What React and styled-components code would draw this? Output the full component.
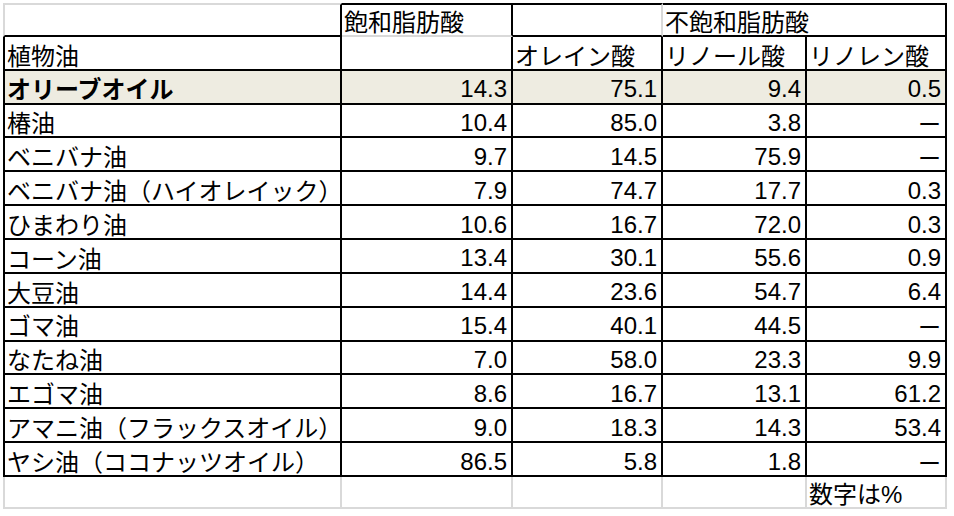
// ===== import base =====
import React from "react"
import styled, { createGlobalStyle } from "styled-components"

// ===== colours =====
const LINE = "#000000"
const GRID = "#d9d9d9"
const TAN = "#eeece1"

// ===== style =====
const GlobalStyle = createGlobalStyle`
    html, body {
        margin : 0;
        padding : 0;
        background : #ffffff;
    }
    body {
        font-family : "Liberation Sans", "Noto Sans CJK JP", sans-serif;
        color : #000000;
    }
`

const Page = styled.div`
    width : 954px;
    height : 516px;
    padding : 3px 0 0 3px;
    box-sizing : border-box;
    overflow : hidden;
`

const Sheet = styled.div`
    display : grid;
    grid-template-columns : 339px 171px 150px 144px 140px;
    grid-template-rows : repeat(14, 33.86px) 32px;
`

const Cell = styled.div`
    box-sizing : border-box;
    display : flex;
    align-items : flex-end;
    justify-content : ${(p) => (p.$num ? "flex-end" : "flex-start")};
    padding : 0 4px 0 ${(p) => (p.$num ? "4px" : "2px")};
    grid-column : ${(p) => (p.$span ? `span ${p.$span}` : "auto")};
    background : ${(p) => (p.$bg ? TAN : "transparent")};
    border-right : 2px solid ${(p) => p.$r || LINE};
    border-bottom : 2px solid ${(p) => p.$b || LINE};
    border-top : ${(p) => (p.$t ? `2px solid ${p.$t}` : "none")};
    border-left : ${(p) => (p.$l ? `2px solid ${p.$l}` : "none")};
    font-size : 24px;
    font-weight : ${(p) => (p.$bold ? 700 : 400)};
    line-height : ${(p) => (p.$num ? "1.1" : "1.05")};
    white-space : nowrap;
`

const Dash = styled.span`
    font-family : "Noto Sans CJK JP", sans-serif;
    font-size : 23px;
`

// ===== data =====
const oils = [
    ["オリーブオイル", "14.3", "75.1", "9.4", "0.5"],
    ["椿油", "10.4", "85.0", "3.8", null],
    ["ベニバナ油", "9.7", "14.5", "75.9", null],
    ["ベニバナ油（ハイオレイック）", "7.9", "74.7", "17.7", "0.3"],
    ["ひまわり油", "10.6", "16.7", "72.0", "0.3"],
    ["コーン油", "13.4", "30.1", "55.6", "0.9"],
    ["大豆油", "14.4", "23.6", "54.7", "6.4"],
    ["ゴマ油", "15.4", "40.1", "44.5", null],
    ["なたね油", "7.0", "58.0", "23.3", "9.9"],
    ["エゴマ油", "8.6", "16.7", "13.1", "61.2"],
    ["アマニ油（フラックスオイル）", "9.0", "18.3", "14.3", "53.4"],
    ["ヤシ油（ココナッツオイル）", "86.5", "5.8", "1.8", null],
]

//  ===== component =====
const App = () => {
    return (
        <React.Fragment>
            <GlobalStyle />
            <Page>
                <Sheet>
                    {/* header row 1 */}
                    <Cell $t={GRID} $l={GRID} />
                    <Cell $t={LINE} $b={GRID}>飽和脂肪酸</Cell>
                    <Cell $t={LINE} $r={GRID} />
                    <Cell $t={LINE} $span={2}>不飽和脂肪酸</Cell>

                    {/* header row 2 */}
                    <Cell $l={LINE}>植物油</Cell>
                    <Cell />
                    <Cell>オレイン酸</Cell>
                    <Cell>リノール酸</Cell>
                    <Cell>リノレン酸</Cell>

                    {oils.map((row, i) => (
                        <React.Fragment key={row[0]}>
                            <Cell $l={LINE} $bg={i === 0} $bold={i === 0}>{row[0]}</Cell>
                            {row.slice(1).map((v, j) => (
                                <Cell key={j} $num $bg={i === 0}>
                                    {v === null ? <Dash>ー</Dash> : v}
                                </Cell>
                            ))}
                        </React.Fragment>
                    ))}

                    {/* note row */}
                    <Cell $l={GRID} $r={GRID} $b={GRID} />
                    <Cell $r={GRID} $b={GRID} />
                    <Cell $r={GRID} $b={GRID} />
                    <Cell $r={GRID} $b={GRID} />
                    <Cell $r={GRID} $b={GRID}>数字は%</Cell>
                </Sheet>
            </Page>
        </React.Fragment>
    )
}

export default App
